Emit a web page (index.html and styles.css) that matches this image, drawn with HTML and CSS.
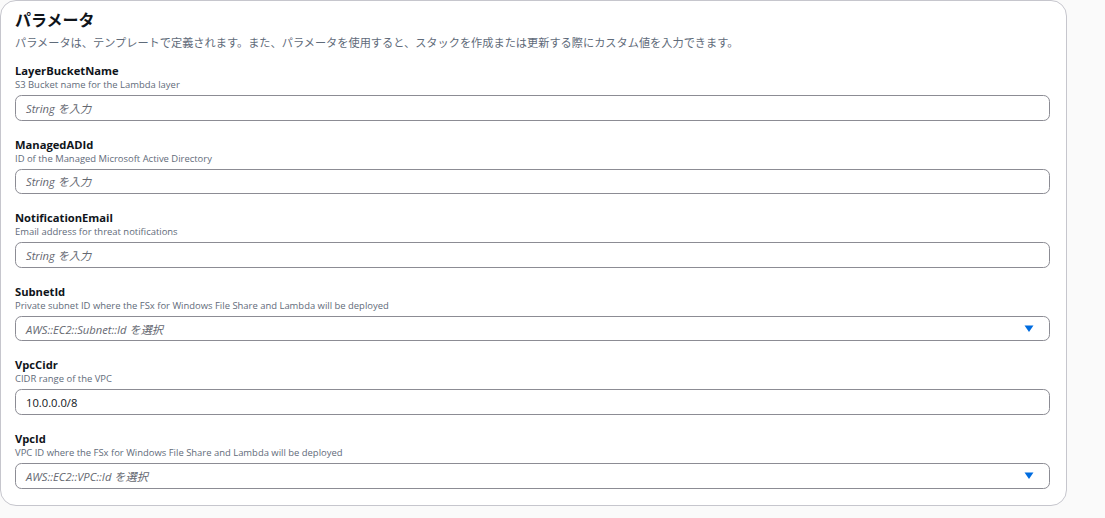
FILE: index.html
```html
<!DOCTYPE html>
<html lang="ja">
<head>
<meta charset="utf-8">
<title>パラメータ</title>
<link rel="stylesheet" href="styles.css">
</head>
<body>
<section class="card">
  <header class="card-header">
    <h2 class="title">パラメータ</h2>
    <p class="subtitle">パラメータは、テンプレートで定義されます。また、パラメータを使用すると、スタックを作成または更新する際にカスタム値を入力できます。</p>
  </header>
  <div class="fields">
    <div class="field">
      <div class="label">LayerBucketName</div>
      <div class="desc">S3 Bucket name for the Lambda layer</div>
      <div class="control"><span class="placeholder">String を入力</span></div>
    </div>
    <div class="field">
      <div class="label">ManagedADId</div>
      <div class="desc">ID of the Managed Microsoft Active Directory</div>
      <div class="control"><span class="placeholder">String を入力</span></div>
    </div>
    <div class="field">
      <div class="label">NotificationEmail</div>
      <div class="desc">Email address for threat notifications</div>
      <div class="control"><span class="placeholder">String を入力</span></div>
    </div>
    <div class="field">
      <div class="label">SubnetId</div>
      <div class="desc">Private subnet ID where the FSx for Windows File Share and Lambda will be deployed</div>
      <div class="control select"><span class="placeholder">AWS::EC2::Subnet::Id を選択</span>
        <svg class="caret" width="10" height="8" viewBox="0 0 10 8"><path d="M0.5 0.5 H9.5 L5 7 Z" fill="#006ce0"/></svg>
      </div>
    </div>
    <div class="field">
      <div class="label">VpcCidr</div>
      <div class="desc">CIDR range of the VPC</div>
      <div class="control"><span class="value">10.0.0.0/8</span></div>
    </div>
    <div class="field">
      <div class="label">VpcId</div>
      <div class="desc">VPC ID where the FSx for Windows File Share and Lambda will be deployed</div>
      <div class="control select"><span class="placeholder">AWS::EC2::VPC::Id を選択</span>
        <svg class="caret" width="10" height="8" viewBox="0 0 10 8"><path d="M0.5 0.5 H9.5 L5 7 Z" fill="#006ce0"/></svg>
      </div>
    </div>
  </div>
</section>
</body>
</html>
```
FILE: styles.css
```css
* { box-sizing: border-box; }
html, body {
  margin: 0;
  padding: 0;
  background: #fafafa;
}
body {
  font-family: "Open Sans", "Noto Sans CJK JP", sans-serif;
  color: #0f141a;
  width: 1105px;
  height: 518px;
  overflow: hidden;
}
.card {
  width: 1067px;
  background: #ffffff;
  border: 1px solid #c6c6cd;
  border-radius: 16px;
  padding: 9px 16px 16px 14px;
}
.title {
  margin: 0;
  font-size: 16px;
  line-height: 20px;
  font-weight: 700;
  font-family: "Open Sans", "Noto Sans CJK JP", sans-serif;
}
.subtitle {
  margin: 5px 0 0 0;
  font-size: 11.2px;
  line-height: 16px;
  color: #5f6b7a;
}
.fields {
  display: flex;
  flex-direction: column;
  gap: 17px;
  margin-top: 13px;
}
.field {
  display: flex;
  flex-direction: column;
}
.label {
  font-size: 11.2px;
  line-height: 14px;
  font-weight: 700;
  color: #0f141a;
}
.desc {
  font-size: 9.45px;
  line-height: 14px;
  color: #5f6b7a;
}
.control {
  margin-top: 3px;
  height: 25.6px;
  border: 1px solid #8c8c94;
  border-radius: 6.4px;
  background: #ffffff;
  display: flex;
  align-items: center;
  justify-content: space-between;
  padding: 0 15px 0 10px;
  font-size: 11.2px;
}
.placeholder {
  font-style: italic;
  color: #656871;
}
.value {
  color: #0f141a;
}
.caret {
  display: block;
}
```
